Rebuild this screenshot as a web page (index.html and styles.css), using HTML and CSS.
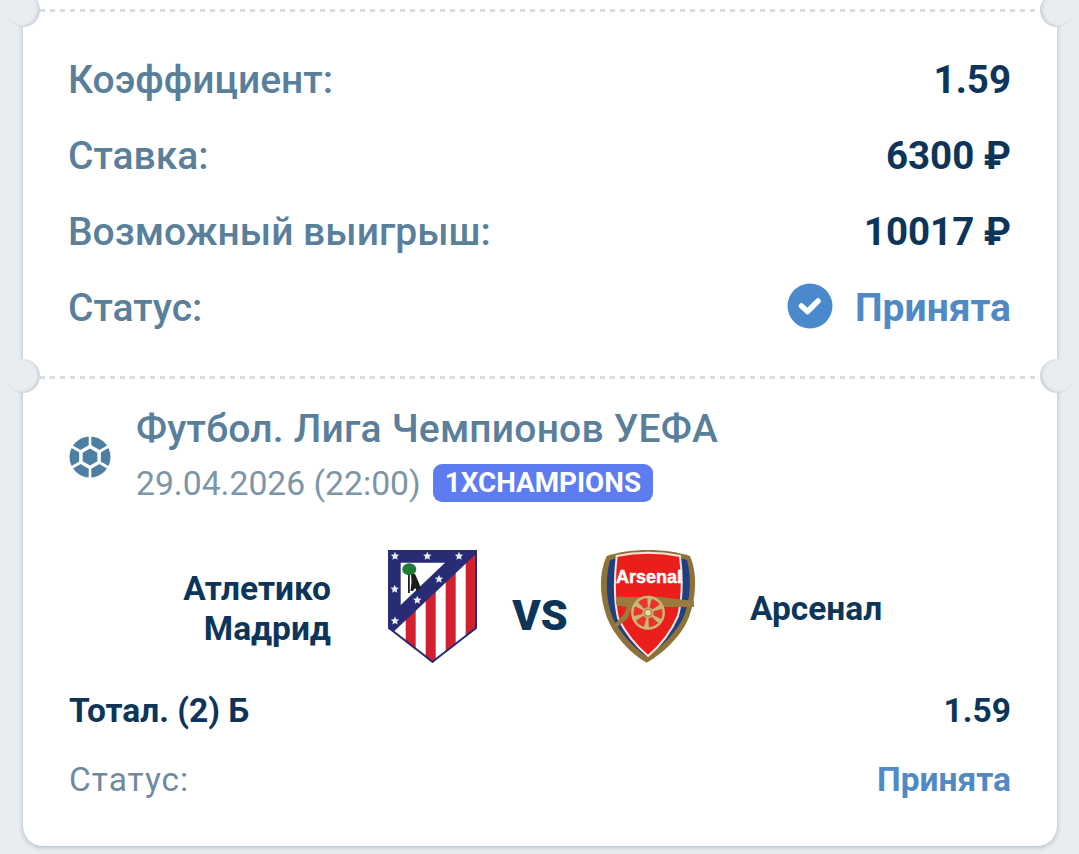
FILE: index.html
```html
<!DOCTYPE html>
<html lang="ru">
<head>
<meta charset="utf-8">
<title>Купон</title>
<link rel="stylesheet" href="styles.css">
</head>
<body>
<main class="ticket">
  <section class="summary">
    <span class="perforation perforation-top"></span>
    <span class="notch notch-l notch-top"></span>
    <span class="notch notch-r notch-top"></span>
    <div class="row"><span class="label">Коэффициент:</span><span class="value">1.59</span></div>
    <div class="row"><span class="label">Ставка:</span><span class="value">6300 ₽</span></div>
    <div class="row"><span class="label">Возможный выигрыш:</span><span class="value">10017 ₽</span></div>
    <div class="row"><span class="label">Статус:</span>
      <span class="status">
        <svg class="check" viewBox="0 0 46 46" width="46" height="46"><circle cx="23" cy="23" r="22.500" fill="#4a89cb"/><path d="M14.500 23l6 5.500 10.500-10.500" fill="none" stroke="#fff" stroke-width="5.500" stroke-linecap="round" stroke-linejoin="round"/></svg>
        <span class="value accepted">Принята</span>
      </span>
    </div>
  </section>
  <section class="event">
    <span class="perforation perforation-mid"></span>
    <span class="notch notch-l notch-mid"></span>
    <span class="notch notch-r notch-mid"></span>
    <div class="league">
      <svg class="ball" viewBox="-21 -21 42 42" width="42" height="42">
        <circle r="20.500" fill="#4d7ea4"/>
        <g fill="none" stroke="#fff">
          <path stroke-width="3.500" d="M0-10.500L9.100-5.250V5.250L0 10.500-9.100 5.250V-5.250Z"/>
          <path stroke-width="2.600" d="M0-10.500V-21M9.100-5.250L18.200-10.500M9.100 5.250L18.200 10.500M0 10.500V21M-9.100 5.250L-18.200 10.500M-9.100-5.250L-18.200-10.500"/>
        </g>
      </svg>
      <div class="league-text">
        <div class="league-name">Футбол. Лига Чемпионов УЕФА</div>
        <div class="league-meta"><span class="date">29.04.2026 (22:00)</span><span class="tag">1XCHAMPIONS</span></div>
      </div>
    </div>
    <div class="match">
      <div class="team team-home">Атлетико<br>Мадрид</div>
      <svg class="crest" viewBox="0 0 89 113" width="89" height="113">
        <defs>
          <clipPath id="shield"><path d="M0 0H89V78L44.500 113 0 78Z"/></clipPath>
          <path id="star" d="M0-4.200l1.200 2.700 3 .3-2.200 2 .6 2.900L0 2.200-2.600 3.700l.6-2.900-2.200-2 3-.3Z" fill="#e9ecf5"/>
        </defs>
        <g clip-path="url(#shield)">
          <rect width="89" height="113" fill="#fff"/>
          <rect x="17.700" width="10" height="113" fill="#d2202f"/>
          <rect x="37.700" width="10" height="113" fill="#d2202f"/>
          <rect x="57.700" width="10" height="113" fill="#d2202f"/>
          <rect x="77.700" width="10" height="113" fill="#d2202f"/>
          <path d="M0 0H89V3L0 87Z" fill="#282c74"/>
          <path d="M12.700 12.700H57L12.700 55Z" fill="#fff"/>
          <path d="M20 22h1.800v21h-1.800ZM23 24L27 24 31 33 32.500 38 29 41 27 38 25 41 22.500 41 23.500 32Z" fill="#1d1d1d"/>
          <ellipse cx="21.300" cy="19.300" rx="7" ry="6" fill="#1f7a3a"/>
        </g>
        <use href="#star" x="7" y="6"/>
        <use href="#star" x="39.300" y="6"/>
        <use href="#star" x="71" y="6"/>
        <use href="#star" x="6.700" y="39"/>
        <use href="#star" x="7" y="70.700"/>
        <use href="#star" x="51" y="29"/>
        <use href="#star" x="29.300" y="50"/>
        <path d="M1 1H88V78L44.500 111.700 1 78Z" fill="none" stroke="#282c74" stroke-width="2"/>
      </svg>
      <div class="versus">VS</div>
      <svg class="crest crest-arsenal" viewBox="0 0 96 113" width="96" height="113">
        <path d="M6.700 6C30-2 66-2 90 6 97 22 97 45 89 67 82 85 65 102 46.700 112.700 28 102 14 85 6.700 67-1 45-1 22 6.700 6Z" fill="#8f7238"/>
        <path d="M10 10C32 3 64 3 87 10 92 30 90 50 84 66 77 82 62 96 47 107 32 96 19 82 12 66 6 50 5 30 10 10Z" fill="#1f3f83"/>
        <path d="M16.700 6C36 2 60 2 80 6 83 30 82 50 78 66 71 82 60 96 48 106 36 96 25 82 18 68 14 50 14 30 16.700 6Z" fill="#ea1f1c" stroke="#f8e4da" stroke-width="2"/>
        <text class="arsenal-word" x="49" y="33" text-anchor="middle" textLength="66" lengthAdjust="spacingAndGlyphs">Arsenal</text>
        <path d="M17 49C16 47 19 46 22 47L34 47H60L94 51V57L64 57H32L28 68 16 78 13 76 24 64 27 57 20 56C16 56 15 53 17 49Z" fill="#9a7b3e"/>
        <circle cx="48" cy="62.700" r="17" fill="#cdb477"/>
        <circle cx="48" cy="62.700" r="10" fill="none" stroke="#e8352c" stroke-width="9" stroke-dasharray="7 3.470" transform="rotate(-75 48 62.700)"/>
        <circle cx="48" cy="62.700" r="3.500" fill="#e8d8a8" stroke="#a88a48" stroke-width="1.500"/>
      </svg>
      <div class="team team-away">Арсенал</div>
    </div>
    <div class="pick"><span>Тотал. (2) Б</span><span>1.59</span></div>
    <div class="pick-status"><span class="pick-label">Статус:</span><span class="pick-accepted">Принята</span></div>
  </section>
</main>
</body>
</html>
```
FILE: styles.css
```css
* { box-sizing: border-box; }

html, body {
  margin: 0;
  height: 854px;
  overflow: hidden;
  background: #e9edf1;
}

body {
  font-family: Roboto, "Noto Sans", sans-serif;
  color: #0c3559;
}

.ticket {
  width: 1034px;
  margin-left: 23px;
  background: #fff;
  border-radius: 0 0 20px 20px;
  box-shadow: 0 1px 5px rgba(70, 85, 105, .38);
}

.summary {
  position: relative;
  height: 377px;
  padding: 42px 45px 0;
}

.event {
  position: relative;
  height: 469px;
  padding: 0 46px;
}

.perforation {
  position: absolute;
  left: 17px;
  right: 17px;
  height: 3px;
  background: repeating-linear-gradient(90deg, #d9dde1 0 5px, transparent 5px 10px);
}

.perforation-top { top: 9px; }
.perforation-mid { top: -1px; }

.notch {
  position: absolute;
  width: 34px;
  height: 34px;
  border-radius: 50%;
  background: #e9edf1;
  z-index: 1;
}

.notch-l { left: -17px; box-shadow: inset -2px -1px 3px rgba(70, 85, 105, .18); }
.notch-r { right: -17px; box-shadow: inset 2px -1px 3px rgba(70, 85, 105, .18); }
.notch-top { top: -7px; }
.notch-mid { top: -18px; }

.row {
  display: flex;
  align-items: center;
  justify-content: space-between;
  height: 76px;
  font-size: 39px;
  font-weight: 500;
}

.label { color: #5a7f9b; }

.value {
  margin: 0 1px 2px 0;
  font-size: 38.500px;
  font-weight: 700;
  color: #0c3559;
}

.status {
  display: flex;
  align-items: center;
  gap: 22px;
}

.check { display: block; margin-bottom: 4px; }

.value.accepted {
  font-size: 39px;
  margin-bottom: 0;
  color: #4f8ac6;
}

.league {
  display: flex;
  align-items: center;
  gap: 25px;
  padding-top: 25px;
}

.ball { display: block; margin-top: 1px; }

.league-name {
  font-size: 39px;
  font-weight: 500;
  line-height: 54px;
  letter-spacing: .2px;
  color: #5a7f9b;
}

.league-meta {
  display: flex;
  align-items: center;
  gap: 12px;
  margin-top: 1px;
}

.date {
  font-size: 33.700px;
  line-height: 54px;
  color: #7d95a8;
}

.tag {
  margin-bottom: 2px;
  padding: 0 12px;
  height: 38px;
  line-height: 38px;
  border-radius: 9px;
  background: #5c7cf0;
  color: #fff;
  font-size: 27.800px;
  font-weight: 700;
}

.match {
  display: flex;
  align-items: center;
  margin-top: 39px;
}

.team {
  padding-top: 4px;
  font-size: 33.500px;
  font-weight: 700;
  line-height: 40px;
}

.team-home { width: 262px; text-align: right; }
.crest { display: block; flex: none; margin-left: 57px; }

.versus {
  width: 123px;
  padding: 16px 0 0 3px;
  text-align: center;
  font-size: 43px;
  font-weight: 900;
  color: #0c3559;
}

.crest-arsenal { margin-left: 0; }
.team-away { margin-left: 54px; }

.arsenal-word {
  font-family: "Liberation Sans", sans-serif;
  font-size: 19px;
  font-weight: 700;
  fill: #fff;
  stroke: #fff;
  stroke-width: .5px;
}

.pick,
.pick-status {
  display: flex;
  justify-content: space-between;
  align-items: center;
  font-size: 33.500px;
}

.pick {
  margin-top: 24px;
  height: 46px;
  font-weight: 700;
}

.pick-status {
  margin-top: 23px;
  height: 46px;
}

.pick-label {
  letter-spacing: 1px;
  color: #6f8a9f;
}

.pick-accepted {
  font-weight: 700;
  color: #4f8ac6;
}
```
